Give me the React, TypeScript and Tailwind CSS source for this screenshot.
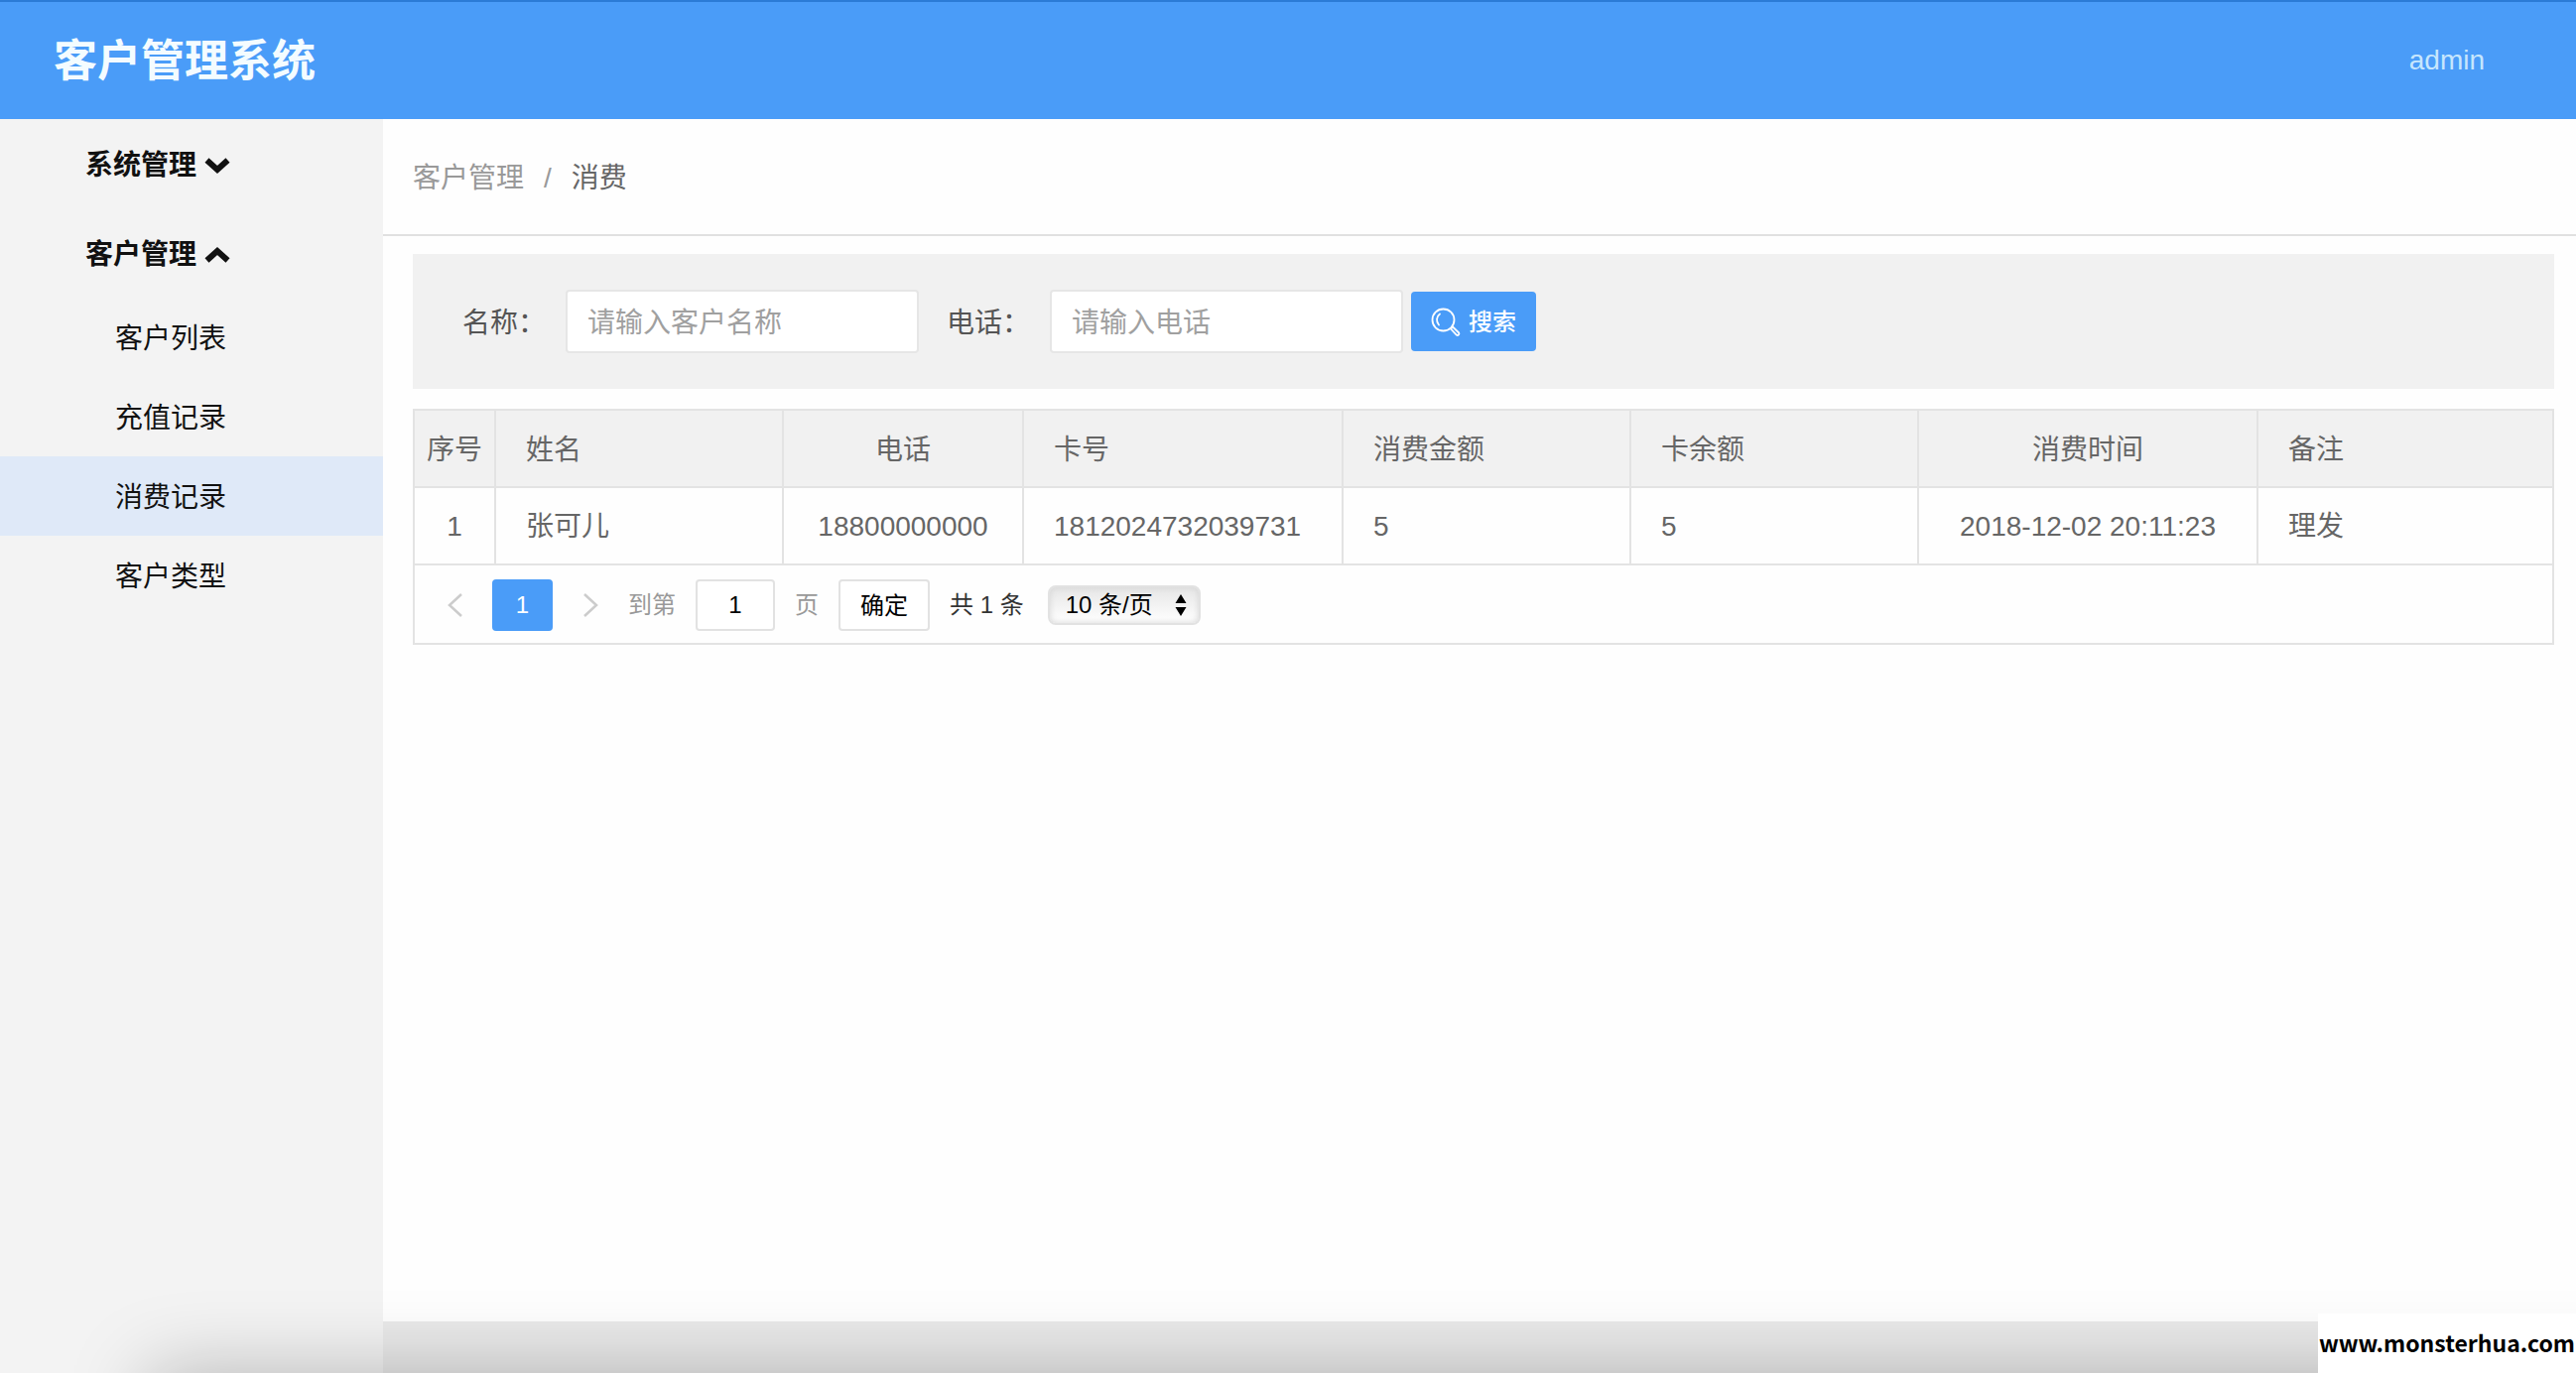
import { useState } from "react";

type Group = {
  title: string;
  items: string[];
};

const menu: Group[] = [
  { title: "系统管理", items: ["用户列表", "角色列表"] },
  { title: "客户管理", items: ["客户列表", "充值记录", "消费记录", "客户类型"] },
];

const records = [
  {
    id: 1,
    name: "张可儿",
    phone: "18800000000",
    card: "1812024732039731",
    amount: 5,
    balance: 5,
    time: "2018-12-02 20:11:23",
    remark: "理发",
  },
];

function Chevron({ open }: { open: boolean }) {
  return (
    <svg width="26" height="18" viewBox="0 0 26 18" fill="none" stroke="currentColor" strokeWidth="6">
      <path d={open ? "M2.5 14.5L13 5L23.5 14.5" : "M2.5 3.5L13 13L23.5 3.5"} />
    </svg>
  );
}

function SearchIcon() {
  return (
    <svg width="30" height="30" viewBox="0 0 30 30" fill="none" stroke="currentColor" strokeWidth="1.8">
      <circle cx="12.5" cy="12.5" r="11" />
      <path d="M9 6.5C5.5 9 5 14 8 17.5" strokeLinecap="round" />
      <path d="M20 21.5L22 19.5L28.2 25.5C29 26.8 27.5 28.6 26 27.8Z" strokeLinejoin="round" />
    </svg>
  );
}

function Sidebar() {
  const [opened, setOpened] = useState(["客户管理"]);
  const [active, setActive] = useState("消费记录");

  const toggle = (title: string) => {
    setOpened(
      opened.includes(title) ? opened.filter((t) => t !== title) : [...opened, title]
    );
  };

  return (
    <nav className="w-[386px] shrink-0 bg-[#f3f3f3] text-[28px] text-[#111]">
      {menu.map((group) => {
        const open = opened.includes(group.title);
        return (
          <div key={group.title}>
            <button
              type="button"
              onClick={() => toggle(group.title)}
              className="flex h-[90px] w-full items-center gap-2 pt-1 pl-[86px] font-bold"
            >
              {group.title}
              <Chevron open={open} />
            </button>
            {open && (
              <ul>
                {group.items.map((item) => (
                  <li key={item}>
                    <a
                      href="#"
                      onClick={() => setActive(item)}
                      className={
                        item === active
                          ? "flex h-20 items-center bg-[#dfe9f8] pt-1 pl-[116px]"
                          : "flex h-20 items-center pt-1 pl-[116px]"
                      }
                    >
                      {item}
                    </a>
                  </li>
                ))}
              </ul>
            )}
          </div>
        );
      })}
    </nav>
  );
}

function SearchForm() {
  return (
    <form
      onSubmit={(e) => e.preventDefault()}
      className="flex h-[136px] items-center bg-[#f1f1f1] pl-[50px] text-[28px] text-[#555]"
    >
      <label htmlFor="name" className="w-[104px] pt-1">
        名称：
      </label>
      <input
        id="name"
        type="text"
        placeholder="请输入客户名称"
        className="h-16 w-[356px] rounded-sm border-2 border-[#e6e6e6] bg-white px-5 pt-1 placeholder:text-[#a0a0a0]"
      />
      <label htmlFor="phone" className="ml-7 w-[104px] pt-1">
        电话：
      </label>
      <input
        id="phone"
        type="text"
        placeholder="请输入电话"
        className="h-16 w-[356px] rounded-sm border-2 border-[#e6e6e6] bg-white px-5 pt-1 placeholder:text-[#a0a0a0]"
      />
      <button
        type="submit"
        className="ml-2 flex h-[60px] w-[126px] items-center justify-center gap-2 rounded bg-[#4a9cf8] pt-0.5 text-[24px] font-medium text-white"
      >
        <SearchIcon />
        搜索
      </button>
    </form>
  );
}

function RecordTable() {
  return (
    <table className="w-full table-fixed border-separate border-spacing-0 text-left text-[28px] text-[#666]">
      <colgroup>
        <col className="w-[82px]" />
        <col className="w-[290px]" />
        <col className="w-[242px]" />
        <col className="w-[322px]" />
        <col className="w-[290px]" />
        <col className="w-[290px]" />
        <col className="w-[342px]" />
        <col />
      </colgroup>
      <thead>
        <tr className="h-[78px] bg-[#f1f1f1] *:border-r-2 *:border-b-2 *:border-[#e3e3e3] *:pt-[3px] *:font-normal">
          <th className="text-center">序号</th>
          <th className="px-[30px]">姓名</th>
          <th className="text-center">电话</th>
          <th className="px-[30px]">卡号</th>
          <th className="px-[30px]">消费金额</th>
          <th className="px-[30px]">卡余额</th>
          <th className="text-center">消费时间</th>
          <th className="border-r-0! px-[30px]">备注</th>
        </tr>
      </thead>
      <tbody>
        {records.map((r) => (
          <tr key={r.id} className="h-[78px] *:border-r-2 *:border-b-2 *:border-[#e3e3e3] *:pt-0.5">
            <td className="text-center">{r.id}</td>
            <td className="px-[30px]">{r.name}</td>
            <td className="text-center">{r.phone}</td>
            <td className="px-[30px]">{r.card}</td>
            <td className="px-[30px]">{r.amount}</td>
            <td className="px-[30px]">{r.balance}</td>
            <td className="text-center">{r.time}</td>
            <td className="border-r-0! px-[30px]">{r.remark}</td>
          </tr>
        ))}
      </tbody>
    </table>
  );
}

function Pagination() {
  return (
    <div className="flex h-[78px] items-center pt-0.5 pl-1 text-[24px] text-[#999]">
      <button type="button" aria-label="上一页" className="flex h-[52px] w-[74px] items-center justify-center text-[#ccc]">
        <svg width="16" height="26" viewBox="0 0 16 26" fill="none" stroke="currentColor" strokeWidth="2.5">
          <path d="M14 2L2 13L14 24" />
        </svg>
      </button>
      <button type="button" className="h-[52px] w-[61px] rounded-sm bg-[#4a9cf8] text-white">
        1
      </button>
      <button type="button" aria-label="下一页" className="flex h-[52px] w-[76px] items-center justify-center text-[#ccc]">
        <svg width="16" height="26" viewBox="0 0 16 26" fill="none" stroke="currentColor" strokeWidth="2.5">
          <path d="M2 2L14 13L2 24" />
        </svg>
      </button>
      <label htmlFor="page">到第</label>
      <input
        id="page"
        type="text"
        defaultValue="1"
        className="mx-5 h-[52px] w-20 rounded border-2 border-[#e2e2e2] bg-white text-center text-black"
      />
      <span>页</span>
      <button
        type="button"
        className="ml-5 h-[52px] w-[92px] rounded border-2 border-[#e2e2e2] bg-white pt-0.5 text-black"
      >
        确定
      </button>
      <span className="ml-5 text-[#333]">共 1 条</span>
      <div className="relative ml-6">
        <select
          aria-label="每页条数"
          className="h-10 w-[154px] appearance-none rounded-lg border-2 border-[#e2e2e2] bg-linear-to-b from-[#e6e6e6] to-white pl-4 text-black shadow-[inset_0_0_6px_#d4d4d4]"
        >
          <option>10 条/页</option>
          <option>20 条/页</option>
          <option>50 条/页</option>
        </select>
        <svg
          width="12"
          height="24"
          viewBox="0 0 12 24"
          fill="black"
          className="pointer-events-none absolute top-2 right-[14px]"
        >
          <path d="M6 1L11.5 10H0.5ZM6 23L11.5 14H0.5Z" />
        </svg>
      </div>
    </div>
  );
}

export default function App() {
  return (
    <div className="relative flex min-h-screen flex-col overflow-hidden bg-[#fefefe] font-['Liberation_Sans','Noto_Sans_CJK_SC',sans-serif]">
      <header className="flex h-[120px] items-center justify-between border-t-2 border-[#2b7bd6] bg-[#4a9cf8] pr-[92px] pl-[54px]">
        <h1 className="pt-0.5 text-[44px] font-bold text-[#f4fcff]">客户管理系统</h1>
        <a href="#" className="text-[28px] text-[#c6e6fd]">
          admin
        </a>
      </header>

      <div className="flex flex-1">
        <Sidebar />
        <main className="flex min-w-0 flex-1 flex-col">
          <div className="flex h-[118px] items-center gap-5 border-b-2 border-[#e0e0e0] pt-[3px] pl-[30px] text-[28px] text-[#999]">
            <a href="#">客户管理</a>
            <span>/</span>
            <span className="text-[#666]">消费</span>
          </div>

          <div className="pt-[18px] pr-[22px] pl-[30px]">
            <SearchForm />
            <div className="mt-5 border-2 border-[#e3e3e3]">
              <RecordTable />
              <Pagination />
            </div>
          </div>

          <footer className="mt-auto h-[52px] bg-[#eaeaea]" />
        </main>
      </div>

      {/* soft shade rising from the bottom edge */}
      <div className="pointer-events-none absolute top-full -right-40 left-[150px] h-40 shadow-[0_0_80px_rgba(0,0,0,0.26)]" />

      <div className="absolute right-0 bottom-0 flex h-[60px] items-center bg-white px-px pb-0.5 font-['Noto_Sans_CJK_SC',sans-serif] text-[23px] font-bold text-black">
        www.monsterhua.com
      </div>
    </div>
  );
}
